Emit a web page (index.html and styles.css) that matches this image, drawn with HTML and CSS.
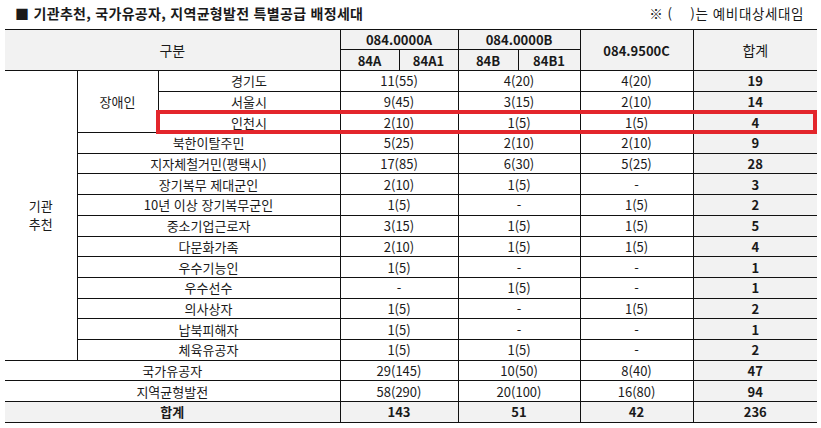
FILE: index.html
```html
<!DOCTYPE html>
<html lang="ko">
<head>
<meta charset="utf-8">
<link rel="stylesheet" href="styles.css">
</head>
<body>
<div class="page">
  <div class="titlebar">
    <div class="title">■ 기관추천, 국가유공자, 지역균형발전 특별공급 배정세대</div>
    <div class="note">※ (&nbsp;&nbsp;&nbsp;&nbsp;)는 예비대상세대임</div>
  </div>
  <div class="tablewrap">
    <table class="alloc">
      <colgroup>
        <col class="c1"><col class="c2"><col class="c3">
        <col class="c4"><col class="c5"><col class="c6"><col class="c7">
        <col class="c8"><col class="c9">
      </colgroup>
      <thead>
        <tr class="h1">
          <th colspan="3" rowspan="2" class="first gubun">구분</th>
          <th colspan="2">084.0000A</th>
          <th colspan="2">084.0000B</th>
          <th rowspan="2">084.9500C</th>
          <th rowspan="2" class="last total-h">합계</th>
        </tr>
        <tr class="h2">
          <th>84A</th><th>84A1</th><th>84B</th><th>84B1</th>
        </tr>
      </thead>
      <tbody>
        <tr>
          <td rowspan="14" class="first agency">기관<br>추천</td>
          <td rowspan="3">장애인</td>
          <td>경기도</td><td colspan="2">11(55)</td><td colspan="2">4(20)</td><td>4(20)</td><td class="last sum">19</td>
        </tr>
        <tr><td>서울시</td><td colspan="2">9(45)</td><td colspan="2">3(15)</td><td>2(10)</td><td class="last sum">14</td></tr>
        <tr><td>인천시</td><td colspan="2">2(10)</td><td colspan="2">1(5)</td><td>1(5)</td><td class="last sum">4</td></tr>
        <tr><td colspan="2">북한이탈주민</td><td colspan="2">5(25)</td><td colspan="2">2(10)</td><td>2(10)</td><td class="last sum">9</td></tr>
        <tr><td colspan="2">지자체철거민(평택시)</td><td colspan="2">17(85)</td><td colspan="2">6(30)</td><td>5(25)</td><td class="last sum">28</td></tr>
        <tr><td colspan="2">장기복무 제대군인</td><td colspan="2">2(10)</td><td colspan="2">1(5)</td><td>-</td><td class="last sum">3</td></tr>
        <tr><td colspan="2">10년 이상 장기복무군인</td><td colspan="2">1(5)</td><td colspan="2">-</td><td>1(5)</td><td class="last sum">2</td></tr>
        <tr><td colspan="2">중소기업근로자</td><td colspan="2">3(15)</td><td colspan="2">1(5)</td><td>1(5)</td><td class="last sum">5</td></tr>
        <tr><td colspan="2">다문화가족</td><td colspan="2">2(10)</td><td colspan="2">1(5)</td><td>1(5)</td><td class="last sum">4</td></tr>
        <tr><td colspan="2">우수기능인</td><td colspan="2">1(5)</td><td colspan="2">-</td><td>-</td><td class="last sum">1</td></tr>
        <tr><td colspan="2">우수선수</td><td colspan="2">-</td><td colspan="2">1(5)</td><td>-</td><td class="last sum">1</td></tr>
        <tr><td colspan="2">의사상자</td><td colspan="2">1(5)</td><td colspan="2">-</td><td>1(5)</td><td class="last sum">2</td></tr>
        <tr><td colspan="2">납북피해자</td><td colspan="2">1(5)</td><td colspan="2">-</td><td>-</td><td class="last sum">1</td></tr>
        <tr><td colspan="2">체육유공자</td><td colspan="2">1(5)</td><td colspan="2">1(5)</td><td>-</td><td class="last sum">2</td></tr>
        <tr><td colspan="3" class="first">국가유공자</td><td colspan="2">29(145)</td><td colspan="2">10(50)</td><td>8(40)</td><td class="last sum">47</td></tr>
        <tr><td colspan="3" class="first">지역균형발전</td><td colspan="2">58(290)</td><td colspan="2">20(100)</td><td>16(80)</td><td class="last sum">94</td></tr>
        <tr class="totalrow"><td colspan="3" class="first">합계</td><td colspan="2">143</td><td colspan="2">51</td><td>42</td><td class="last">236</td></tr>
      </tbody>
    </table>
    <div class="highlight"></div>
  </div>
</div>
</body>
</html>
```

FILE: styles.css
```css
html, body {
  margin: 0;
  padding: 0;
  background: #ffffff;
}

body {
  font-family: "Noto Sans CJK KR", "Noto Sans", sans-serif;
  color: #1a1a1a;
  font-size: 13px;
}

.page {
  width: 821px;
  padding: 0 0 0 5px;
  box-sizing: border-box;
}

.titlebar {
  display: flex;
  justify-content: space-between;
  align-items: center;
  height: 29px;
  padding: 0 17px 0 10px;
}

.title {
  font-weight: bold;
  font-size: 14px;
  letter-spacing: 0.3px;
  margin-top: -4px;
}

.note {
  font-size: 13.5px;
  letter-spacing: 0.6px;
  margin-top: -4px;
}

.tablewrap {
  position: relative;
  width: 812px;
}

.alloc {
  border-collapse: collapse;
  table-layout: fixed;
  width: 812px;
}

.c1 { width: 72px; }
.c2 { width: 81px; }
.c3 { width: 182px; }
.c4 { width: 59px; }
.c5 { width: 59px; }
.c6 { width: 60px; }
.c7 { width: 62px; }
.c8 { width: 113px; }
.c9 { width: 124px; }

.alloc th,
.alloc td {
  border: 1px solid #111;
  padding: 0;
  text-align: center;
  vertical-align: middle;
  line-height: 17px;
  white-space: nowrap;
}

.alloc td.agency {
  line-height: 18px;
}

.alloc .first { border-left: none; }
.alloc .last { border-right: none; }

.alloc thead th {
  background: #f2f2f2;
  font-weight: 600;
  font-size: 13px;
}

.alloc thead .gubun,
.alloc thead .total-h {
  font-weight: normal;
  font-size: 14px;
}

.h1 { height: 20px; }
.h2 { height: 21px; }

.alloc tbody tr { height: 20.7px; }

.alloc td.sum {
  background: #f2f2f2;
  font-weight: bold;
}

.totalrow td {
  background: #f2f2f2;
  font-weight: bold;
}

.highlight {
  position: absolute;
  left: 151px;
  top: 81px;
  width: 661px;
  height: 24px;
  border: 4px solid #e3262c;
  box-sizing: border-box;
}
```
